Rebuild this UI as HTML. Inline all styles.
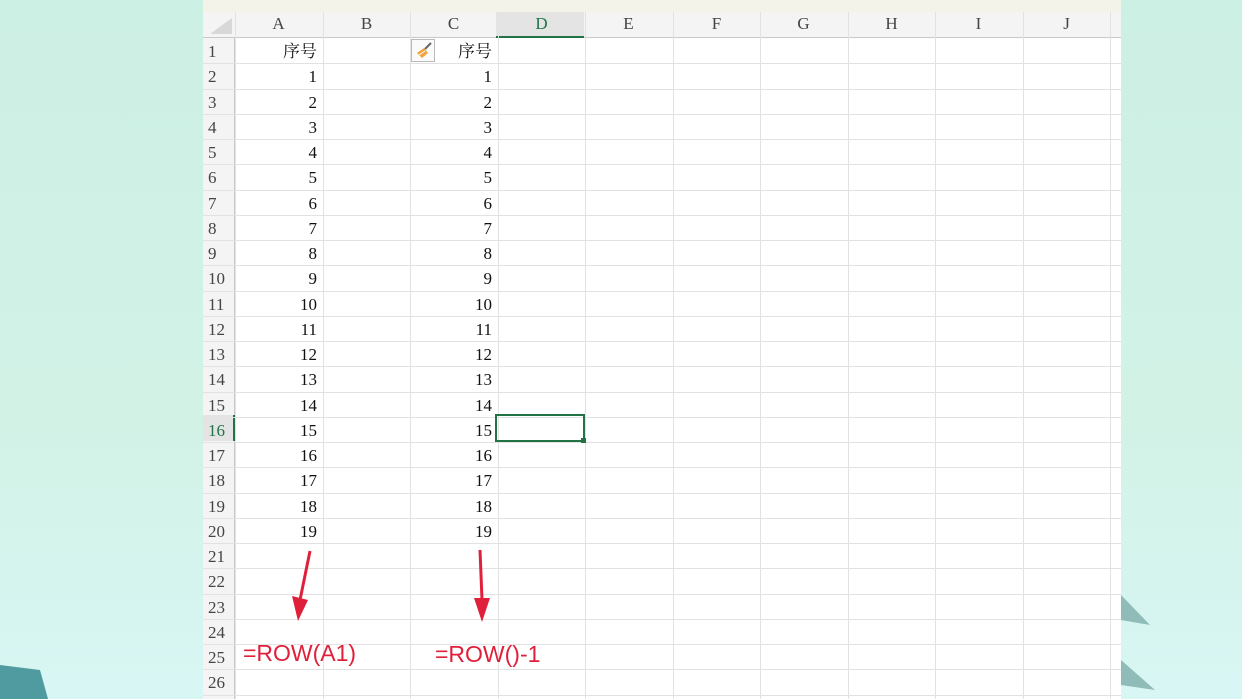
<!DOCTYPE html>
<html><head><meta charset="utf-8"><style>
body{margin:0;width:1242px;height:699px;overflow:hidden;position:relative;background:linear-gradient(180deg,#cdf0e4 0%,#d2f2e6 60%,#d8f6f4 100%);font-family:"Liberation Serif","Noto Serif CJK SC",serif;}
.a{position:absolute}
.sheet{left:203px;top:0;width:918px;height:699px;background:#fff;}
.top{left:203px;top:0;width:918px;height:12px;background:#f3f3ea}
.hdr{left:203px;top:12px;width:918px;height:26px;background:#f4f4f4;border-bottom:1px solid #c9c9c9;box-sizing:border-box}
.rh{left:203px;top:38px;width:32px;height:661px;background:#f4f4f4;border-right:1px solid #c9c9c9;box-sizing:border-box}
.vl{position:absolute;top:12px;width:1px;height:687px;background:#e2e2e2}
.hl{position:absolute;left:203px;width:918px;height:1px;background:#e2e2e2}
.ch{position:absolute;top:14px;width:87px;text-align:center;font-size:17px;color:#444}
.rn{position:absolute;left:205px;width:28px;text-align:left;font-size:17px;color:#444;padding-left:3px;height:25px;line-height:25px}
.n{position:absolute;width:82px;text-align:right;font-size:17px;color:#111;height:25px;line-height:25px}
.red{position:absolute;color:#e0203a;font-family:"Liberation Sans",sans-serif;font-size:23px}
</style></head><body>
<div class="a sheet"></div>
<div class="a top"></div>
<div class="a hdr"></div>
<div class="a" style="left:496px;top:12px;width:88px;height:26px;background:#e4e4e4;border-bottom:2px solid #217346;box-sizing:border-box"></div>
<div class="a rh"></div>
<div class="a" style="left:210px;top:18px;width:0;height:0;border-left:22px solid transparent;border-bottom:16px solid #d8d8d8"></div>
<div class="a" style="left:203px;top:415px;width:32px;height:26px;background:#e4e4e4;border-right:2px solid #217346;box-sizing:border-box"></div>
<div id="g"></div>
<div class="a" style="left:495px;top:414px;width:90px;height:28px;border:2px solid #217346;box-sizing:border-box"></div>
<div class="a" style="left:581px;top:438px;width:5px;height:5px;background:#217346"></div>
<div class="a" style="left:411px;top:39px;width:24px;height:23px;border:1px solid #bbb;box-sizing:border-box;background:#fafafa"></div>
<svg class="a" style="left:411px;top:39px" width="24" height="23"><path d="M6 14 L13 9 L17 14 L11 19 Z" fill="#f0a33c"/><path d="M14 10 L20 4" stroke="#666" stroke-width="2"/><path d="M8 16 L14 12" stroke="#fff" stroke-width="1"/></svg>
<svg class="a" style="left:0;top:0" width="1242" height="699">
<path d="M310 551 L300 600" stroke="#e0203a" stroke-width="3"/><path d="M292 596 L308 600 L298 621 Z" fill="#e0203a"/>
<path d="M480 550 L482 600" stroke="#e0203a" stroke-width="3"/><path d="M474 598 L490 598 L482 622 Z" fill="#e0203a"/>
<path d="M1121 595 L1150 625 L1121 620Z M1121 660 L1155 690 L1121 685Z" fill="#8fbcb8"/>
<path d="M0 665 L40 670 L48 699 L0 699Z" fill="#4f9ba0"/>
</svg>
<div class="red" style="left:243px;top:640px">=ROW(A1)</div>
<div class="red" style="left:435px;top:641px">=ROW()-1</div>
<script>
var g=document.getElementById('g'),h='';
var cols='ABCDEFGHIJ';
for(var i=0;i<=10;i++){var x=Math.round(235+i*87.5);h+='<div class="vl" style="left:'+x+'px"></div>';if(i<10)h+='<div class="ch" style="left:'+(x)+'px;'+(i==3?'color:#217346':'')+'">'+cols[i]+'</div>';}
for(var r=1;r<=26;r++){var y=Math.round(38+r*25.25);h+='<div class="hl" style="top:'+y+'px"></div>';var ty=Math.round(38+(r-1)*25.25)+1;
h+='<div class="rn" style="top:'+ty+'px;'+(r==16?'color:#217346':'')+'">'+r+'</div>';
var t=r==1?'序号':(r<=20?(r-1):'');
if(t!==''){h+='<div class="n" style="left:235px;top:'+ty+'px">'+t+'</div><div class="n" style="left:410px;top:'+ty+'px">'+t+'</div>';}}
g.innerHTML=h;
</script>
</body></html>
